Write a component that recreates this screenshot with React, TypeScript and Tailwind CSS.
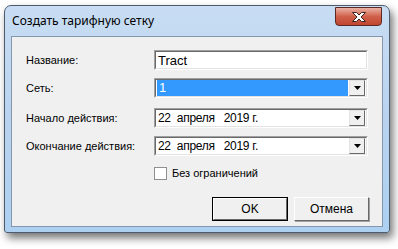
import React from "react";

const sunkenOuter = "border-t border-l border-t-[#a0a0a0] border-l-[#a0a0a0] border-b border-r border-b-white border-r-white";
const sunkenInner = "border-t border-l border-t-[#696969] border-l-[#696969] border-b border-r border-b-[#e3e3e3] border-r-[#e3e3e3]";

function Field({ children }: { children: React.ReactNode }) {
    return (
        <div className={`w-[214px] h-[20px] ${sunkenOuter}`}>
            <div className={`h-full w-full bg-white flex items-center ${sunkenInner}`}>{children}</div>
        </div>
    );
}

function DropButton() {
    return (
        <div className="w-[16px] h-[16px] mr-[1px] border-t border-l border-t-[#e3e3e3] border-l-[#e3e3e3] border-b border-r border-b-[#696969] border-r-[#696969] bg-[#f0f0f0] flex items-center justify-center">
            <svg width="7" height="4" viewBox="0 0 7 4">
                <path d="M0 0h7L3.5 4z" fill="#000" />
            </svg>
        </div>
    );
}

function Row({ label, children, className = "" }: { label: string; children: React.ReactNode; className?: string }) {
    return (
        <div className={`flex items-center ${className}`}>
            <div className="w-[128px] text-[11px] text-black">{label}</div>
            {children}
        </div>
    );
}

function DateField() {
    return (
        <Field>
            <span className="flex-1 pl-[2px] text-[12px] tracking-[-0.3px] whitespace-pre leading-none">22  апреля   2019 г.</span>
            <DropButton />
        </Field>
    );
}

export default function App() {
    return (
        <div className="w-[398px] h-[249px] bg-white pl-[4px] pt-[5px]" style={{ fontFamily: '"Liberation Sans", Arial, sans-serif' }}>
            <div className="w-[386px] h-[228px] rounded-t-[7px] rounded-b-[3px] border border-[#4d5c6d] bg-gradient-to-b from-[#c8ddf3] via-[#b9d3ef] to-[#add0f1] shadow-[3px_5px_9px_rgba(0,0,0,0.55)] flex flex-col">
                <div className="h-[30px] flex items-start">
                    <span className="pl-[7px] pt-[6px] text-[12px] text-black" style={{ fontFamily: '"Noto Sans", sans-serif' }}>
                        Создать тарифную сетку
                    </span>
                    <div className="ml-auto mr-[7px] mt-[1px] w-[47px] h-[19px] rounded-b-[4px] border border-[#5b2a24] bg-gradient-to-b from-[#e8b1a4] via-[#d0604a] to-[#c0452f] flex items-center justify-center">
                        <svg width="16" height="12" viewBox="0 0 16 12">
                            <path d="M1.5 1.5h4l2.5 2.5 2.5-2.5h4l-4.5 4.5 4.5 4.5h-4l-2.5-2.5-2.5 2.5h-4l4.5-4.5z" fill="#fff" stroke="#3a2424" strokeWidth="1" strokeLinejoin="round" />
                        </svg>
                    </div>
                </div>
                <div className="mx-[6px] h-[191px] border border-[#8497ad] bg-[#f0f0f0] pl-[14px] pt-[13px] flex flex-col">
                    <Row label="Название:">
                        <Field>
                            <span className="pl-[2px] text-[13px] leading-none">Tract</span>
                        </Field>
                    </Row>
                    <Row label="Сеть:" className="mt-[8px]">
                        <Field>
                            <div className="flex-1 h-[16px] ml-[1px] mr-[1px] bg-[#3399ff] text-white text-[13px] pl-[2px] flex items-center">1</div>
                            <DropButton />
                        </Field>
                    </Row>
                    <Row label="Начало действия:" className="mt-[10px]">
                        <DateField />
                    </Row>
                    <Row label="Окончание действия:" className="mt-[8px]">
                        <DateField />
                    </Row>
                    <div className="flex items-center mt-[9px] pl-[128px]">
                        <div className="w-[13px] h-[13px] bg-white border border-[#8e8f8f]" />
                        <span className="ml-[5px] text-[11px] text-black">Без ограничений</span>
                    </div>
                    <div className="flex mt-[15px] pl-[186px] gap-[6px]">
                        <div className="w-[76px] h-[24px] border border-black flex">
                            <div className="flex-1 border-t border-l border-t-white border-l-white border-b border-r border-b-[#696969] border-r-[#696969] bg-[#f0f0f0] flex items-center justify-center text-[12px]">
                                OK
                            </div>
                        </div>
                        <div className="w-[75px] h-[24px] border-t border-l border-t-white border-l-white border-b border-r border-b-[#696969] border-r-[#696969] bg-[#f0f0f0] flex items-center justify-center text-[12px] shadow-[1px_1px_0_#a0a0a0]">
                            Отмена
                        </div>
                    </div>
                </div>
            </div>
        </div>
    );
}
